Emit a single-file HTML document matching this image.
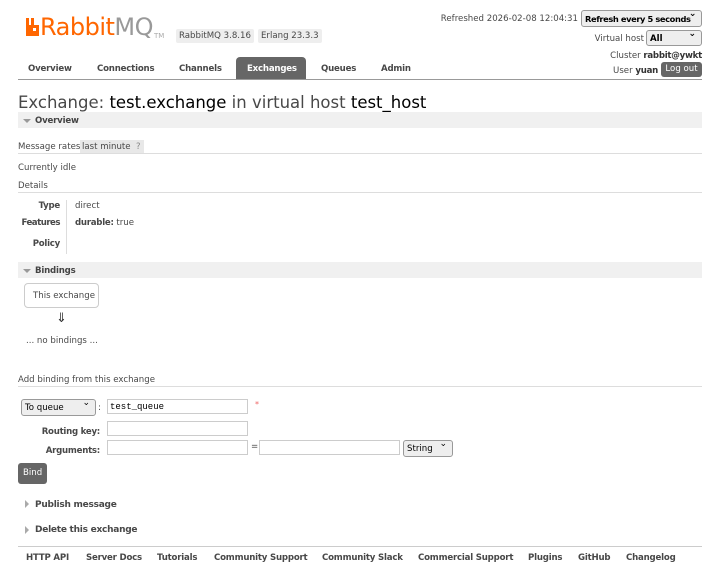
<!DOCTYPE html>
<html><head><meta charset="utf-8"><style>
*{margin:0;padding:0;box-sizing:border-box}
body{width:720px;height:587px;background:#fff;font-family:"DejaVu Sans","Liberation Sans",sans-serif;font-size:8.6px;color:#484848;position:relative;overflow:hidden}
.a{position:absolute;white-space:nowrap}
.b,b{font-weight:bold;letter-spacing:-0.25px}
.line{position:absolute;height:1px;background:#ddd}
.hdr{position:absolute;left:18px;width:684px;height:16px;background:#f0f0f0;font-weight:bold;color:#444;padding:4px 0 0 17px;letter-spacing:-0.2px}
.tri{position:absolute;left:5px;top:7px;width:0;height:0;border-left:4px solid transparent;border-right:4px solid transparent;border-top:4px solid #999}
.rtri{position:absolute;width:0;height:0;border-top:4px solid transparent;border-bottom:4px solid transparent;border-left:4px solid #aaa}
.sel{position:absolute;border:1px solid #999;border-radius:3px;background:#eee;color:#000;padding:3px 0 0 3px;font-size:8.6px;white-space:nowrap;overflow:hidden}
.sel:after{content:"\2304";position:absolute;right:5px;top:-2px;font-size:9px}
.inp{position:absolute;border:1px solid #ccc;background:#fff;height:15px}
.nav{position:absolute;top:64px;font-weight:bold;color:#484848;letter-spacing:-0.2px}
.foot{position:absolute;top:553px;font-weight:bold;color:#484848;letter-spacing:-0.2px}
</style></head><body>
<svg class="a" style="left:26px;top:18px" width="13" height="18" viewBox="0 0 13 18"><path d="M0 0h3v7h2V0h3v7h5v11H0z" fill="#f60"/><rect x="7" y="10" width="3" height="3" fill="#fff"/></svg>
<div class="a" style="left:40px;top:13px;font-family:'DejaVu Sans',sans-serif;font-size:24px;color:#f60;letter-spacing:-0.5px">Rabbit<span style="color:#999">MQ</span></div>
<div class="a" style="left:154px;top:32px;font-size:7px;color:#aaa">TM</div>
<div class="a" style="left:176px;top:29px;background:#eee;padding:2px 3px;border-radius:2px">RabbitMQ 3.8.16</div>
<div class="a" style="left:258px;top:29px;background:#eee;padding:2px 3px;border-radius:2px">Erlang 23.3.3</div>

<div class="a" style="right:142px;top:14px">Refreshed 2026-02-08 12:04:31</div>
<div class="sel" style="left:581px;top:10px;width:121px;height:17px;font-weight:bold;letter-spacing:-0.4px;font-size:8.3px">Refresh every 5 seconds</div>
<div class="a" style="right:76px;top:34px">Virtual host</div>
<div class="sel" style="left:646px;top:30px;width:56px;height:16px;font-weight:bold">All</div>
<div class="a" style="right:18px;top:51px">Cluster <b style="color:#333">rabbit@ywkt</b></div>
<div class="a" style="right:62px;top:66px">User <b style="color:#333">yuan</b></div>
<div class="a" style="left:661px;top:62px;width:41px;height:15px;background:#666;color:#fff;border-radius:3px;text-align:center;padding-top:2px">Log out</div>

<div class="a" style="left:236px;top:57px;width:70px;height:22px;background:#666;border-radius:4px 4px 0 0"></div>
<div class="nav" style="left:28px">Overview</div>
<div class="nav" style="left:97px">Connections</div>
<div class="nav" style="left:179px">Channels</div>
<div class="nav" style="left:247px;color:#fff">Exchanges</div>
<div class="nav" style="left:321px">Queues</div>
<div class="nav" style="left:381px">Admin</div>
<div class="line" style="left:18px;top:79px;width:684px;background:#999"></div>

<div class="a" style="left:18px;top:93px;font-size:16.5px;color:#484848">Exchange: <span style="color:#000">test.exchange</span> in virtual host <span style="color:#000">test_host</span></div>
<div class="hdr" style="top:112px"><div class="tri"></div>Overview</div>
<div class="a" style="left:18px;top:142px">Message rates</div>
<div class="a" style="left:80px;top:140px;background:#e8e8e8;padding:2px 2px">last minute</div>
<div class="a" style="left:133px;top:140px;background:#e8e8e8;padding:2px 3px;color:#888">?</div>
<div class="line" style="left:18px;top:153px;width:684px"></div>
<div class="a" style="left:18px;top:163px">Currently idle</div>
<div class="a" style="left:18px;top:181px">Details</div>
<div class="line" style="left:18px;top:192px;width:684px"></div>
<div class="a b" style="right:660px;top:201px">Type</div>
<div class="a b" style="right:660px;top:218px;letter-spacing:-0.5px">Features</div>
<div class="a b" style="right:660px;top:239px">Policy</div>
<div class="a" style="left:66px;top:200px;width:1px;height:54px;background:#ddd"></div>
<div class="a" style="left:75px;top:201px">direct</div>
<div class="a" style="left:75px;top:218px"><b>durable:</b> true</div>

<div class="hdr" style="top:262px"><div class="tri"></div>Bindings</div>
<div class="a" style="left:24px;top:283px;width:75px;height:25px;border:1px solid #ccc;border-radius:4px;padding:7px 0 0 8px">This exchange</div>
<div class="a" style="left:56px;top:311px;font-size:13px;color:#333">⇓</div>
<div class="a" style="left:26px;top:336px">... no bindings ...</div>

<div class="a" style="left:18px;top:375px">Add binding from this exchange</div>
<div class="line" style="left:18px;top:386px;width:684px"></div>
<div class="sel" style="left:21px;top:399px;width:75px;height:17px">To queue</div>
<div class="a" style="left:98px;top:403px">:</div>
<div class="inp" style="left:107px;top:399px;width:141px;font-family:'Liberation Mono',monospace;font-size:9px;color:#000;padding:2px 0 0 2px">test_queue</div>
<div class="a" style="left:255px;top:400px;color:#e66;font-size:8px">*</div>
<div class="a b" style="right:620px;top:427px">Routing key:</div>
<div class="inp" style="left:107px;top:421px;width:141px"></div>
<div class="a b" style="right:620px;top:446px">Arguments:</div>
<div class="inp" style="left:107px;top:440px;width:141px"></div>
<div class="a" style="left:251px;top:442px">=</div>
<div class="inp" style="left:259px;top:440px;width:141px"></div>
<div class="sel" style="left:403px;top:440px;width:50px;height:17px">String</div>
<div class="a" style="left:18px;top:463px;width:29px;height:21px;background:#666;color:#fff;border-radius:3px;padding:5px 0 0 5px">Bind</div>

<div class="rtri" style="left:25px;top:500px"></div>
<div class="a b" style="left:35px;top:500px;font-size:9px">Publish message</div>
<div class="rtri" style="left:25px;top:526px"></div>
<div class="a b" style="left:35px;top:525px;font-size:9px">Delete this exchange</div>

<div class="line" style="left:18px;top:546px;width:684px;background:#ccc"></div>
<div class="foot" style="left:26px">HTTP API</div>
<div class="foot" style="left:86px">Server Docs</div>
<div class="foot" style="left:157px">Tutorials</div>
<div class="foot" style="left:214px">Community Support</div>
<div class="foot" style="left:322px">Community Slack</div>
<div class="foot" style="left:418px">Commercial Support</div>
<div class="foot" style="left:528px">Plugins</div>
<div class="foot" style="left:578px">GitHub</div>
<div class="foot" style="left:626px">Changelog</div>
</body></html>
